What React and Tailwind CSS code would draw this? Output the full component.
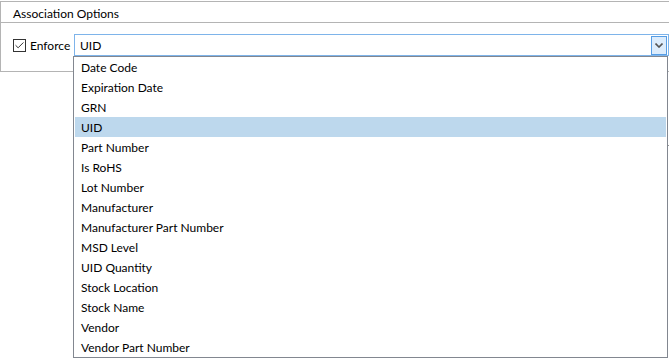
import { Check } from "lucide-react";

const options = [
  "Date Code",
  "Expiration Date",
  "GRN",
  "UID",
  "Part Number",
  "Is RoHS",
  "Lot Number",
  "Manufacturer",
  "Manufacturer Part Number",
  "MSD Level",
  "UID Quantity",
  "Stock Location",
  "Stock Name",
  "Vendor",
  "Vendor Part Number",
];

const selected = "UID";

export default function App() {
  return (
    <div
      className="relative w-[669px] h-[360px] overflow-hidden bg-white text-[12px] text-black"
      style={{ fontFamily: 'Lato, "Noto Sans", sans-serif' }}
    >
      {/* group box */}
      <div className="mt-px h-[71px] border-l border-t border-b border-[#b4b4b4]">
        <div className="flex h-[21px] items-center border-b border-[#b4b4b4] pl-[12px] pt-[3px]">
          Association Options
        </div>
        <div className="flex items-center pt-[11px]">
          <div className="ml-[12px] flex h-[13px] w-[13px] items-center justify-center border border-[#333333] bg-white">
            <Check className="h-[11px] w-[11px] text-[#222]" strokeWidth={2} />
          </div>
          <span className="ml-[4px] w-[44px] pt-[2px]">Enforce</span>
          <div className="flex h-[22px] flex-1 items-center border border-[#7eb4ea] bg-white pl-[5px] pr-px">
            <span className="flex-1 pt-[2px]">{selected}</span>
            <div className="flex h-[19px] w-[16px] items-center justify-center border border-[#569de5] bg-[#dcecfc]">
              <svg width="8" height="5" viewBox="0 0 8 5">
                <path d="M0.5 0.5 L4 4 L7.5 0.5" fill="none" stroke="#555" strokeWidth="1.6" />
              </svg>
            </div>
          </div>
        </div>
      </div>

      {/* stray edge behind the dropdown */}
      <div className="absolute left-[667px] top-[145px] h-px w-[2px] bg-[#999]" />

      {/* dropdown list */}
      <ul className="absolute left-[73px] top-[56px] w-[595px] border border-[#828790] bg-white px-px">
        {options.map((opt) => (
          <li
            key={opt}
            className={`flex h-[20px] items-center pl-[6px] pt-[2px] ${
              opt === selected ? "bg-[#bdd8ed]" : ""
            }`}
          >
            {opt}
          </li>
        ))}
      </ul>
    </div>
  );
}
